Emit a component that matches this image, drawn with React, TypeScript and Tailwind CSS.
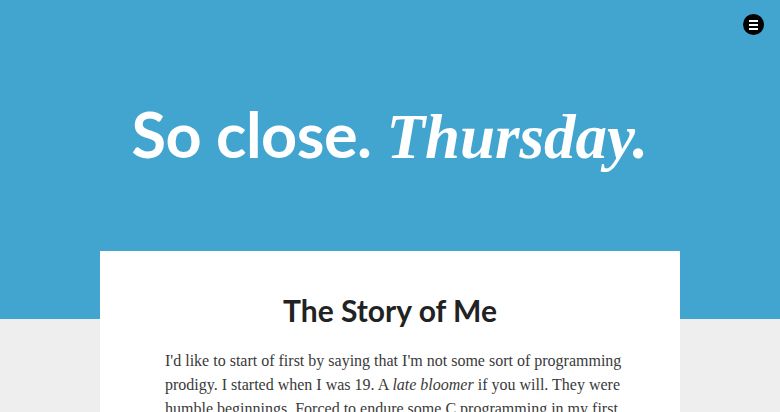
export default function App() {
  return (
    <div className="min-h-[412px] bg-[#eeeeee] overflow-hidden">
      <header className="relative h-[319px] bg-[#41a5cf] flex justify-center pt-[96px]">
        <button className="absolute top-[14px] right-[16px] w-[21px] h-[21px] rounded-full bg-black flex flex-col items-center justify-center gap-[2px]">
          <span className="block w-[9px] h-[2px] bg-white" />
          <span className="block w-[9px] h-[2px] bg-white" />
          <span className="block w-[9px] h-[2px] bg-white" />
        </button>
        <h1 className="text-white text-[63px] leading-[76px] whitespace-nowrap">
          <span className="font-['Lato'] font-bold tracking-[-0.5px]">So close. </span>
          <em className="font-['Liberation_Serif'] italic font-bold">Thursday.</em>
        </h1>
      </header>
      <main className="relative -mt-[68px] flex justify-center">
        <article className="w-[580px] bg-white pt-[39px] pl-[65px] pr-[50px] pb-10">
          <h2 className="text-center pr-[15px] font-['Lato'] font-bold text-[30px] leading-[40px] text-[#222]">
            The Story of Me
          </h2>
          <p className="mt-[19px] font-['Liberation_Serif'] text-[16px] leading-[24px] text-[#3a3a3a]">
            I'd like to start of first by saying that I'm not some sort of programming prodigy. I
            started when I was 19. A <em>late bloomer</em> if you will. They were humble
            beginnings. Forced to endure some C programming in my first year of university, I
            quickly learned that there was more to it than I expected.
          </p>
        </article>
      </main>
    </div>
  )
}
